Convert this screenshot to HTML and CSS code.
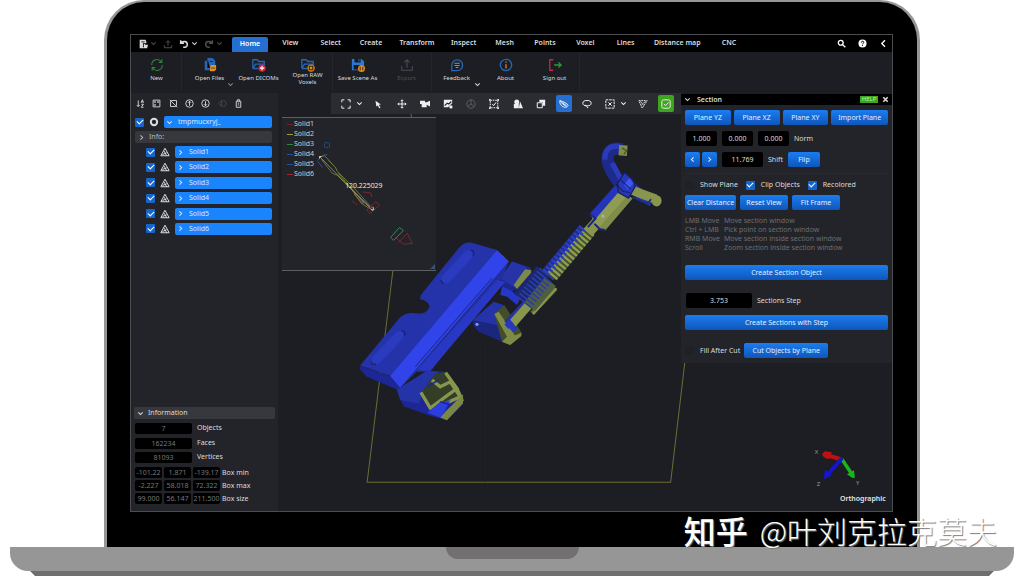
FILE: index.html
```html
<!DOCTYPE html>
<html lang="en">
<head>
<meta charset="utf-8">
<meta name="viewport" content="width=device-width, initial-scale=1">
<title>Section</title>
<link rel="stylesheet" href="styles.css">
</head>
<body>
<svg class="sprite" aria-hidden="true">
  <symbol id="down" viewBox="0 0 8 8"><path class="ln" d="M1.5 2.7 4 5.2 6.5 2.7"/></symbol>
  <symbol id="right" viewBox="0 0 8 8"><path class="ln" d="M2.8 1.5 5.3 4 2.8 6.5"/></symbol>
  <symbol id="left" viewBox="0 0 8 8"><path class="ln" d="M5.3 1.5 2.8 4 5.3 6.5"/></symbol>
  <symbol id="tri" viewBox="0 0 12 12"><path class="ln" d="M6 1.5 11 10.5H1Z M5 5 8 10.500 M3 9 8 7"/></symbol>
</svg>
<div class="laptop">
  <div class="lid">
    <div class="screen">
      <header class="menubar">
        <div class="quick">
          <button aria-label="File"><svg viewBox="0 0 12 12"><path fill="currentColor" d="M2 1h7l1 2v2H6v6H2Z"/><path fill="currentColor" d="M6 6h2l1 1h3l-1 4H6Z"/><path stroke="#000" d="M4 3.500H8M6.500 5.500V10"/></svg></button>
          <button aria-label="File menu" class="dim tiny"><svg><use href="#down"/></svg></button>
          <button aria-label="Upload" class="dim gap"><svg viewBox="0 0 12 12"><path class="ln" d="M6 8V2M3.500 4.500 6 2l2.500 2.500M1.500 7.500V10.500h9V7.500"/></svg></button>
          <button aria-label="Undo" class="gap"><svg viewBox="0 0 12 12"><path class="ln heavy" d="M2 1.500V5H6M2 5C4 2 10 2 10 6.500 10 9 8 10 5 10"/></svg></button>
          <button aria-label="Undo history" class="tiny"><svg><use href="#down"/></svg></button>
          <button aria-label="Redo" class="dim gap"><svg viewBox="0 0 12 12"><path class="ln heavy" d="M10 1.500V5H6M10 5C8 2 2 2 2 6.500 2 9 4 10 7 10"/></svg></button>
          <button aria-label="Redo history" class="dim tiny"><svg><use href="#down"/></svg></button>
        </div>
        <nav class="tabs">
          <button class="active">Home</button><button>View</button><button>Select</button><button>Create</button><button>Transform</button><button>Inspect</button><button>Mesh</button><button>Points</button><button>Voxel</button><button>Lines</button><button>Distance map</button><button>CNC</button>
        </nav>
        <div class="utils">
          <button aria-label="Search"><svg viewBox="0 0 12 12"><circle class="ln heavy" cx="5" cy="5" r="3.200"/><path class="ln heavy" d="m7.500 7.500 3.500 3.500"/></svg></button>
          <button aria-label="Help"><svg viewBox="0 0 12 12"><circle cx="6" cy="6" r="5.400" fill="currentColor"/><path d="M4.300 4.800C4.300 2.300 7.800 2.500 7.700 4.500 7.600 5.700 6 5.700 6 7.200M6 8.200V9.400" fill="none" stroke="#000" stroke-width="1.300"/></svg></button>
          <button aria-label="Collapse ribbon"><svg viewBox="0 0 8 8"><path class="ln" d="M5.300 1.200 2.500 4 5.300 6.800"/></svg></button>
        </div>
      </header>

      <div class="ribbon">
        <div class="group">
          <button><svg viewBox="0 0 16 16" class="refresh"><path class="ln" stroke-width="1.500" d="M2 8a6 6 0 0 1 11-3.500M13.500 1.500v3.500H10M14 8a6 6 0 0 1-11 3.500M2.500 14.500V11H6"/></svg><span>New</span></button>
        </div>
        <div class="group">
          <button><svg viewBox="0 0 16 16"><path fill="#2466b8" d="M5 0h6l3 3v8H8v3H2V3h3Z"/><path stroke="#17191e" d="M5.500 3V11H8M8 4h3"/><path fill="#e0912a" d="M8 10l1-2h6v5l-2 2H8Z"/><path stroke="#5c3a10" d="M9 11.500h5"/></svg><span>Open Files</span><svg class="caret dim"><use href="#down"/></svg></button>
          <button><svg viewBox="0 0 16 16"><path fill="none" stroke="#2466b8" stroke-width="1.500" d="M1 12V2h5l1.500 2H14v4M1 12 4 7h11M1 12h6"/><circle cx="11.500" cy="11.500" r="4.200" fill="#d4273c"/><path stroke="#fff" stroke-width="1.300" d="M9 11.500h5M11.500 9v5"/></svg><span>Open DICOMs</span></button>
          <button class="two"><svg viewBox="0 0 16 16"><path fill="none" stroke="#2466b8" stroke-width="1.500" d="M1 12V2h5l1.500 2H14v4M1 12 4 7h11M1 12h6"/><circle cx="11.500" cy="11.500" r="4.200" fill="#e28a1c"/><path fill="none" stroke="#3a2508" stroke-width="1.200" d="M9.500 9.500h4v4h-4Z"/></svg><span>Open RAW Voxels</span></button>
        </div>
        <div class="group">
          <button><svg viewBox="0 0 16 16"><path fill="#2878d8" d="M1 1h11l3 3v10H1Z"/><path fill="#17191e" d="M4 1h7v4H4ZM3 8h10v5H3Z"/><path stroke="#2878d8" d="M9 1v3"/><circle cx="12" cy="12" r="4" fill="#e28a1c"/><path fill="none" stroke="#3a2508" d="M10.500 10v4M13.500 10v4"/></svg><span>Save Scene As</span></button>
          <button class="dim"><svg viewBox="0 0 16 16"><path class="ln" d="M8 11V2M5 5l3-3 3 3M2 9v5h12V9"/></svg><span>Export</span></button>
        </div>
        <div class="group">
          <button><svg viewBox="0 0 16 16"><path fill="none" stroke="#2466b8" stroke-width="1.500" d="M2 14.500V8a6.200 6.200 0 1 1 6.200 6.500Z"/><path stroke="#b5913a" stroke-width="1.200" d="M5 6h6M5 8.500h6M6.500 10.800h3"/></svg><span>Feedback</span><svg class="caret"><use href="#down"/></svg></button>
          <button><svg viewBox="0 0 16 16"><circle cx="8" cy="8" r="6.500" fill="none" stroke="#2466b8" stroke-width="1.500"/><path stroke="#d07a34" stroke-width="1.600" d="M8 7v5M8 4v1.500"/></svg><span>About</span></button>
          <button><svg viewBox="0 0 16 16"><path fill="none" stroke="#c22743" stroke-width="1.500" d="M6 2H2v12h4"/><path fill="none" stroke="#2f9a3a" stroke-width="1.500" d="M7 8h8M12 5l3 3-3 3"/></svg><span>Sign out</span></button>
        </div>
      </div>

      <main class="work">
        <aside class="side">
          <div class="sidetools">
            <button aria-label="Sort"><svg viewBox="0 0 12 12"><path class="ln" d="M3 2v8M1 8l2 2 2-2M7 5l1.500-4L10 5M7.500 3.800h2M7 7h3L7 11h3"/></svg></button>
            <button aria-label="Select all"><svg viewBox="0 0 12 12"><path class="ln" d="M1.500 1.500h9v9h-9Z"/><path fill="currentColor" d="M3 3h2v2H3ZM7 3h2v2H7ZM3 7h2v2H3Z"/></svg></button>
            <button aria-label="Deselect"><svg viewBox="0 0 12 12"><path class="ln" d="M3 2h7v7M2 3v7h7M1 1l10 10"/></svg></button>
            <button aria-label="Move up"><svg viewBox="0 0 12 12"><circle class="ln" cx="6" cy="6" r="5"/><path class="ln" d="M6 9V3M4 5l2-2 2 2"/></svg></button>
            <button aria-label="Move down"><svg viewBox="0 0 12 12"><circle class="ln" cx="6" cy="6" r="5"/><path class="ln" d="M6 3v6M4 7l2 2 2-2"/></svg></button>
            <button aria-label="Flip" class="dim"><svg viewBox="0 0 12 12"><path class="ln" d="M5 2 1 6l4 4ZM7 2c5 0 5 8 0 8"/></svg></button>
            <button aria-label="Delete"><svg viewBox="0 0 12 12"><path class="ln" d="M3 3h6v8H3ZM4.500 3V1h3v2M5 5.500h2M5 8h2"/></svg></button>
          </div>
          <div class="row root">
            <input type="checkbox" checked aria-label="Show tmpmucxryj_">
            <svg class="kind" viewBox="0 0 12 12"><circle cx="6" cy="6" r="3.800" fill="none" stroke="currentColor" stroke-width="2.400"/></svg>
            <button class="node"><svg><use href="#down"/></svg>tmpmucxryj_</button>
          </div>
          <button class="fold info"><svg><use href="#right"/></svg>Info:</button>
          <div class="tree">
            <div class="row child"><input type="checkbox" checked aria-label="Show Solid1"><svg class="kind"><use href="#tri"/></svg><button class="node"><svg><use href="#right"/></svg>Solid1</button></div>
            <div class="row child"><input type="checkbox" checked aria-label="Show Solid2"><svg class="kind"><use href="#tri"/></svg><button class="node"><svg><use href="#right"/></svg>Solid2</button></div>
            <div class="row child"><input type="checkbox" checked aria-label="Show Solid3"><svg class="kind"><use href="#tri"/></svg><button class="node"><svg><use href="#right"/></svg>Solid3</button></div>
            <div class="row child"><input type="checkbox" checked aria-label="Show Solid4"><svg class="kind"><use href="#tri"/></svg><button class="node"><svg><use href="#right"/></svg>Solid4</button></div>
            <div class="row child"><input type="checkbox" checked aria-label="Show Solid5"><svg class="kind"><use href="#tri"/></svg><button class="node"><svg><use href="#right"/></svg>Solid5</button></div>
            <div class="row child"><input type="checkbox" checked aria-label="Show Solid6"><svg class="kind"><use href="#tri"/></svg><button class="node"><svg><use href="#right"/></svg>Solid6</button></div>
          </div>

          <section class="information">
            <button class="fold"><svg><use href="#down"/></svg>Information</button>
            <div class="stat"><input id="objects" value="7" readonly><label for="objects">Objects</label></div>
            <div class="stat"><input id="faces" value="162234" readonly><label for="faces">Faces</label></div>
            <div class="stat"><input id="vertices" value="81093" readonly><label for="vertices">Vertices</label></div>
            <div class="box"><input id="min" value="-101.22" readonly><input aria-label="Box min y" value="1.871" readonly><input aria-label="Box min z" value="-139.17" readonly><label for="min">Box min</label></div>
            <div class="box"><input id="max" value="-2.227" readonly><input aria-label="Box max y" value="58.018" readonly><input aria-label="Box max z" value="72.322" readonly><label for="max">Box max</label></div>
            <div class="box"><input id="size" value="99.000" readonly><input aria-label="Box size y" value="56.147" readonly><input aria-label="Box size z" value="211.500" readonly><label for="size">Box size</label></div>
          </section>
        </aside>

        <div class="viewport">
          <svg class="scene" viewBox="278 93 613 418" preserveAspectRatio="xMidYMid slice" role="img" aria-label="3D model cut by a section plane">
            <path d="M411 113v5M393 268 367 482H670L685 355" fill="none" stroke="#6c6d35"/>
            <path d="M485 345V482" stroke="#202228"/>
            <!-- bracket plate -->
            <g transform="translate(350 230) scale(.3333)">
              <path fill="#1c278f" d="M450 145 485 95 540 112 542 130 496 178 480 190 455 170Z"/>
              <path fill="#2634a8" d="M450 145 485 95 530 112 492 172Z"/>
              <path fill="#7d8a48" d="M490 165 524 118 543 120 540 140 500 178Z"/>
              <path fill="#8c9a4e" d="M500 190 545 145 560 160 520 200Z"/>
              <path fill="#2536c8" d="M455 170 480 180 510 205 500 225 470 200 450 195Z"/>
              <path fill="#1b267f" d="M368 270 440 230 515 310 480 345 385 305 368 285Z"/>
              <path fill="#2433a8" d="M368 270 430 215 460 225 440 285Z"/>
              <path fill="#434d28" d="M432 252 462 225 515 310 480 345 455 335Z"/>
              <path fill="#7d8a48" d="M432 252 445 245 495 318 460 330 513 308 513 318 480 345 455 335 470 320Z"/>
              <circle cx="380" cy="283" r="5" fill="#8490e8"/>
              <path fill="#1c2795" d="M30 408 120 438 150 474 230 422 290 425 340 500 335 525 290 570 235 555 160 528 140 478 50 440 30 418Z"/>
              <path fill="#2433a9" d="M30 406 150 262Q170 245 198 250 228 255 238 230 235 213 210 208 208 200 216 190L325 55Q340 36 362 38L440 60 122 438Z"/>
              <path fill="#3144ea" d="M440 60 476 95 150 474 120 438Z"/>
              <path fill="#222f9f" d="M476 95 455 145 240 425 200 425 150 474Z"/>
              <path fill="#2838c4" d="M440 150 465 155 240 422 200 420Z"/>
              <path stroke="#1c298e" stroke-width="3" d="M425 145 195 410"/>
              <path stroke="#2a3bc0" stroke-width="28" stroke-linecap="round" d="M287 147 354 75M78 390 147 317"/>
              <path fill="none" stroke="#19236f" stroke-width="4" d="M362 60Q374 64 368 78M154 302Q170 305 162 318M273 150Q272 160 282 160M64 394Q64 406 78 402"/>
              <path fill="#2433a8" d="M140 478 230 422 265 425 220 485 205 520 150 510Z"/>
              <path fill="#343d26" d="M215 485 255 430 290 425 338 500 270 520 238 535Z"/>
              <path fill="none" stroke="#87954d" stroke-width="10" d="M212 487 240 534 320 475 286 428M245 450 270 470 300 455 330 500 285 520M320 475 335 510 285 565"/>
              <path fill="#2c3ee0" d="M232 548 270 515 300 510 285 540 270 562Z"/>
              <path fill="#7b8844" d="M285 545 338 492 338 520 290 570 270 562Z"/>
              <path stroke="#1d2795" stroke-width="5" d="M230 470 265 450M270 515 305 525"/>
            </g>
            <!-- spring damper and hook -->
            <g transform="translate(480 130) scale(.3333)" fill="none">
              <path stroke="#5b6836" stroke-width="15" d="M155 550 225 475"/>
              <path stroke="#87954d" stroke-width="7" d="M158 552 228 475"/>
              <path stroke="#25349f" stroke-width="18" d="M78 580 135 520"/>
              <path stroke="#87954d" stroke-width="26" d="M95 582 145 525"/>
              <path stroke="#2838bd" stroke-width="18" d="M78 590 95 575M90 585 105 600"/>
              <path stroke="#1b286f" stroke-width="48" d="M187 425 118 505"/>
              <path stroke="#4f5e40" stroke-width="42" d="M210 455 148 530"/>
              <path stroke="#2b3da8" stroke-width="56" stroke-dasharray="5 7" d="M200 430 130 518"/>
              <path stroke="#202d8c" stroke-width="28" d="M308 294 195 430"/>
              <path stroke="#46532d" stroke-width="36" d="M328 304 214 440"/>
              <path stroke="#8f9e52" stroke-width="36" stroke-dasharray="7 6" d="M328 304 214 440"/>
              <path stroke="#2c3fc4" stroke-width="25" stroke-dasharray="7 6" d="M308 294 195 430"/>
              <path stroke="#87954d" stroke-width="34" d="M365 260 322 308"/>
              <path fill="#7f8d48" d="M408 172 456 206 374 302 358 295 342 284 332 256Z"/>
              <path fill="#8f9d54" d="M412 178 440 198 358 290 338 274Z"/>
              <path fill="#2535bb" d="M404 166 420 180 343 270 328 252Z"/>
              <path stroke="#1b2680" stroke-width="6" d="M328 252 345 266 322 292M342 282 358 298 374 300"/>
              <path stroke="#1d2a8c" stroke-width="36" d="M425 58Q380 48 381 92 385 120 415 158"/>
              <path stroke="#2a3ab8" stroke-width="16" d="M418 50Q372 44 373 90M395 100 422 150"/>
              <path stroke="#7f8d4c" stroke-width="31" d="M415 61 440 63"/>
              <path stroke="#47532c" stroke-width="4" d="M425 55 438 63 430 74"/>
              <path stroke="#2433a8" stroke-width="30" d="M445 165 480 195 515 216"/>
              <path stroke="#87954d" stroke-width="28" d="M452 180Q490 196 526 208"/>
              <path stroke="#1e2b91" stroke-width="5" d="M456 202 500 222 512 208"/>
              <ellipse cx="528" cy="213" rx="15" ry="17" fill="#87954d"/>
              <path fill="#2838bb" stroke="#17215f" stroke-width="4" d="M432 128 456 148 464 170 444 205 414 188 411 160Z"/>
              <path fill="#4055f2" d="M430 165 446 145 459 160 442 180Z"/>
              <path stroke="#17215f" stroke-width="3" d="M412 168 428 185 448 188M420 150 450 178"/>
              <circle cx="367" cy="259" r="4" fill="#aab5b4"/>
            </g>
            <!-- axis gizmo -->
            <path stroke="#bd1111" stroke-width="4" d="M840 459 828 455.500"/><path fill="#bd1111" d="M821 454 824 451 831 452 828 459 823 457Z"/>
            <path stroke="#1bb51b" stroke-width="3.500" d="M841 459 851 474"/><path fill="#1bb51b" d="M846 474 853 470 854 477 852 478Z"/>
            <path stroke="#1515cf" stroke-width="4" d="M841 458 828 473"/><path fill="#1515cf" d="M824 469 831 475 823 479Z"/>
            <g class="axis"><text x="814" y="454">X</text><text x="855" y="485">Y</text><text x="816" y="486">Z</text></g>
            <text class="projection" x="839" y="501">Orthographic</text>
          </svg>

          <div class="stage">
            <div class="toolbar">
              <button aria-label="Fit view"><svg viewBox="0 0 12 12"><path class="ln" d="M1 4V1h3M8 1h3v3M11 8v3H8M4 11H1V8"/></svg></button>
              <button aria-label="Fit options" class="tiny"><svg><use href="#down"/></svg></button>
              <button aria-label="Pointer"><svg viewBox="0 0 12 12"><path fill="currentColor" d="M3 2 9.500 6.500 7 7l2 3.500-1.500.7-1.800-3.500L4 9Z"/></svg></button>
              <button aria-label="Move"><svg viewBox="0 0 12 12"><path class="ln" d="M6 1v10M1 6h10M4.500 2.500 6 1l1.500 1.500M4.500 9.500 6 11l1.500-1.500M2.500 4.500 1 6l1.500 1.500M9.500 4.500 11 6 9.500 7.500"/></svg></button>
              <button aria-label="Camera"><svg viewBox="0 0 12 12"><path fill="currentColor" d="M0 2h6v2h2l4-2v7L8 7v3H2V6H0Z"/></svg></button>
              <button aria-label="Background"><svg viewBox="0 0 12 12"><path fill="currentColor" d="M1 1h10v4L6 10H1Z"/><path d="m2 8 3-3 2 1 3-3" stroke="#26282d" stroke-width="1.500" fill="none"/><circle cx="9.500" cy="9.500" r="2" fill="currentColor"/></svg></button>
              <button aria-label="Wheel" class="dim"><svg viewBox="0 0 12 12"><circle class="ln" cx="6" cy="6" r="5"/><path class="ln" d="M6 1v5L2 9M6 6l4 3"/></svg></button>
              <button aria-label="Select box"><svg viewBox="0 0 12 12"><path class="ln" stroke-dasharray="2 1" d="M1.500 1.500h9v9h-9Z"/><path class="ln" d="m4 6 1.500 2L8.500 4"/><path fill="currentColor" d="M0 0h2v2H0ZM10 0h2v2h-2ZM0 10h2v2H0ZM10 10h2v2h-2Z"/></svg></button>
              <button aria-label="Shapes"><svg viewBox="0 0 12 12"><circle cx="4.500" cy="3.500" r="3" fill="currentColor"/><path fill="currentColor" d="M1 6h6v5H1ZM8.500 3l3.500 8H7Z"/></svg></button>
              <button aria-label="Copy"><svg viewBox="0 0 12 12"><path fill="currentColor" d="M4 1h7v7H8V4H4Z"/><path class="ln" d="M1.500 4.500h6v6h-6Z"/></svg></button>
              <button aria-label="Section" class="on"><svg viewBox="0 0 12 12"><path class="ln" d="M1 2c4 1 9 3 10 6-2 3-6 2-8 0S1 4 1 2l8 6M3 5l6 4"/></svg></button>
              <button aria-label="Lasso"><svg viewBox="0 0 12 12"><ellipse class="ln" cx="6" cy="5" rx="5" ry="3.200"/><path class="ln" d="M4 7c0 3 3 1 3 4"/></svg></button>
              <button aria-label="Clear selection"><svg viewBox="0 0 12 12"><path class="ln" stroke-dasharray="3 1" d="M1 1h10v10H1Z"/><path class="ln" d="m4 4 4 4M8 4 4 8"/></svg></button>
              <button aria-label="Selection options" class="tiny"><svg><use href="#down"/></svg></button>
              <button aria-label="Mesh points"><svg viewBox="0 0 12 12"><path class="ln" stroke-dasharray="2 1" d="M1 2h10L5 11ZM3 3l4 5M9 3 4 7"/></svg></button>
              <button aria-label="Confirm" class="ok"><svg viewBox="0 0 12 12"><rect class="ln" x="1" y="1" width="10" height="10" rx="2"/><path class="ln" d="m3.500 6 2 2L9 4"/></svg></button>
            </div>
            <div class="preview">
              <ul class="legend"><li class="red">Solid1</li><li class="yellow">Solid2</li><li class="green">Solid3</li><li class="blue">Solid4</li><li class="blue">Solid5</li><li class="crimson">Solid6</li></ul>
              <svg class="profile" viewBox="282 117 154 154" fill="none" role="img" aria-label="Section profile with distance 120.225029">
                <rect x="324" y="142" width="5" height="5" rx="1" stroke="#214a8c"/>
                <path stroke="#2d5590" d="m317 160 5-5 5-1M317 161l5 6"/>
                <path stroke="#6c7736" d="M319 157 324 155 335 167 337 171 354 188 372 208M321 159 332 173 337 175 352 190 361 203 370 209M328 160 336 168M338 173l26 30"/>
                <path stroke="#94752f" d="M350 188 370 207M354 194l10 11"/>
                <path stroke="#7c2833" d="m363 192 8 1 1 4M352 201l5 4M367 210l9-8 4 3-10 9ZM396 238l8 7 9-1-5-10M399 243l9-9"/>
                <path stroke="#278f57" d="m391 238 9-10 4 3-10 10Z"/>
                <path stroke="#a5a794" stroke-width=".7" d="m319 156 54 55"/>
                <path stroke="#d2d2c5" d="M371 210h3l-1-3M319 158v-2h2"/>
                <path fill="#35527a" d="M436 265v5h-5Z"/>
                <text class="measure" x="345" y="188">120.225029</text>
              </svg>
            </div>
          </div>

          <section class="section">
            <header><svg><use href="#down"/></svg><h2>Section</h2><a href="#help">HELP</a><button aria-label="Close"><svg class="close" viewBox="0 0 8 8"><path class="ln heavy" d="m1.500 1.500 5 5M6.500 1.500l-5 5"/></svg></button></header>
            <div class="body">
              <div class="planes"><button class="btn">Plane YZ</button><button class="btn">Plane XZ</button><button class="btn">Plane XY</button><button class="btn">Import Plane</button></div>
              <div class="line norm"><input id="norm" value="1.000"><input aria-label="Norm y" value="0.000"><input aria-label="Norm z" value="0.000"><label for="norm">Norm</label></div>
              <div class="line shift"><button class="btn sq" aria-label="Previous"><svg><use href="#left"/></svg></button><button class="btn sq" aria-label="Next"><svg><use href="#right"/></svg></button><input id="shift" value="11.769"><label for="shift">Shift</label><button class="btn flip">Flip</button></div>
              <div class="checks"><label><input type="checkbox">Show Plane</label><label><input type="checkbox" checked>Clip Objects</label><label><input type="checkbox" checked>Recolored</label></div>
              <div class="line views"><button class="btn">Clear Distance</button><button class="btn">Reset View</button><button class="btn">Fit Frame</button></div>
              <dl class="hints"><dt>LMB Move</dt><dd>Move section window</dd><dt>Ctrl + LMB</dt><dd>Pick point on section window</dd><dt>RMB Move</dt><dd>Move section inside section window</dd><dt>Scroll</dt><dd>Zoom section inside section window</dd></dl>
              <button class="btn wide">Create Section Object</button>
              <div class="line step"><input id="step" value="3.753"><label for="step">Sections Step</label></div>
              <button class="btn wide">Create Sections with Step</button>
              <div class="line cut"><label><input type="checkbox">Fill After Cut</label><button class="btn">Cut Objects by Plane</button></div>
            </div>
          </section>
        </div>
      </main>
    </div>
  </div>
  <div class="base"><div class="notch"></div></div>
  <div class="foot"></div>
  <div class="watermark"><b>知乎</b><span>@叶刘克拉克莫夫</span></div>
</div>
</body>
</html>
```
FILE: styles.css
```css
* { box-sizing: border-box; }
body { margin: 0; background: #fff; color: #dcdcdc; font: 7px/10px "Noto Sans", "Open Sans", sans-serif; }
button, input { font: inherit; color: inherit; margin: 0; padding: 0; border: 0; background: none; min-width: 0; }
button { display: flex; align-items: center; justify-content: center; white-space: nowrap; cursor: pointer; }
ul, dl, dd, h2 { margin: 0; padding: 0; list-style: none; }
svg { display: block; width: 10px; height: 10px; flex: none; }
svg:has(use[href="#down"]), svg:has(use[href="#right"]), svg:has(use[href="#left"]) { width: 7px; height: 7px; }
.sprite { position: absolute; width: 0; height: 0; }
.ln { fill: none; stroke: currentColor; stroke-width: 1.2; }
.heavy { stroke-width: 1.8; }
.dim { color: #4c4e53; }

.laptop { position: relative; display: flex; flex-direction: column; min-height: 100vh; overflow: hidden; }
.lid { flex: 1; display: flex; margin: 0 104px; padding: 32px 24px 35px 23px; border: 3px solid #969696; border-width: 2px 3px 0; border-radius: 40px 40px 0 0; background: #000; }
.screen { flex: 1; min-width: 0; display: flex; flex-direction: column; border: 1px solid #4c4d51; background: #1c1e23; }
.base { height: 24px; margin: 0 10px; background: #969696; border-radius: 0 0 18px 18px; }
.notch { width: 133px; height: 12px; margin: 0 auto; background: #727070; border-radius: 0 0 12px 12px; }
.foot { height: 5px; margin: 0 30px; background: #6e6e6e; clip-path: polygon(0 0, 100% 0, calc(100% - 5px) 100%, 5px 100%); }
.watermark { position: absolute; right: 27px; bottom: 24px; display: flex; gap: 12px; color: #fff; font: 30px/44px "Noto Sans CJK SC", sans-serif; text-shadow: 1px 1px 1px #777; }
.watermark b { font-size: 32px; font-weight: 500; }
.watermark span { font-weight: 300; }

.menubar { display: flex; align-items: center; height: 17px; background: #000; }
.quick { display: flex; align-items: center; width: 101px; padding-left: 7px; }
.quick .tiny { margin-left: 2px; }
.quick .gap { margin-left: 6px; }
.tabs { flex: 0 1 515px; display: flex; justify-content: space-between; }
.tabs button { min-width: 36px; height: 15px; padding: 0 6px; font-weight: 600; }
.tabs .active { margin-top: 1px; background: #246fd0; border-radius: 2px 2px 0 0; color: #fff; }
.utils { display: flex; gap: 12px; margin-left: auto; padding: 0 4px 1px 0; color: #fff; }
.utils svg { width: 9px; height: 9px; }

.ribbon { display: flex; height: 41px; padding-bottom: 2px; }
.group { display: flex; border-right: 1px solid #24262b; }
.group:first-child { padding-left: 1px; }
.ribbon button { position: relative; flex-direction: column; justify-content: flex-start; width: 49px; padding-top: 6px; gap: 3px; font-size: 6px; line-height: 7px; }
.ribbon button > svg:first-child { width: 14px; height: 14px; }
.ribbon .group:nth-child(2) { padding-left: 3px; }
.ribbon .refresh { color: #2a8836; }
.ribbon .two { gap: 0; white-space: normal; }
.ribbon .two span { width: 36px; }
.ribbon .caret { position: absolute; right: 0; bottom: 3px; }
.ribbon .caret.dim { color: #888; }

.work { flex: 1; display: grid; grid-template-columns: 147px 1fr; }
.side { display: flex; flex-direction: column; gap: 3px; padding: 0 6px 7px 4px; background: #22242a; }
.sidetools { display: flex; justify-content: space-between; width: 108px; height: 20px; padding-left: 1px; align-items: center; }
.sidetools svg { width: 9px; height: 9px; }
.row { display: flex; align-items: center; gap: 5px; height: 12px; }
.row .kind { width: 10px; height: 10px; color: #ddd; }
.tree { display: flex; flex-direction: column; justify-content: space-between; height: 89px; }
.child { padding-left: 11px; }
.node { flex: 1; justify-content: flex-start; gap: 5px; height: 12px; padding-left: 2px; background: #1a84fc; border-radius: 2px; color: #dce8fa; }
.fold { width: 100%; justify-content: flex-start; gap: 4px; height: 12px; padding-left: 3px; background: #36383d; border-radius: 2px; }
.side .info { color: #bbb; }

input[type="checkbox"] { appearance: none; flex: none; width: 9px; height: 9px; background: #1f2126; border-radius: 1px; display: grid; place-items: center; }
input[type="checkbox"]:checked { background: #1565cc; }
input[type="checkbox"]:checked::after { content: ""; width: 5px; height: 3px; margin-top: -2px; border: solid #fff; border-width: 0 0 1px 1px; rotate: -45deg; }
input:not([type="checkbox"]) { background: #000; border-radius: 2px; text-align: center; }

.information { margin: auto -4px 0 0; display: flex; flex-direction: column; gap: 2px; }
.information .fold { margin: 0 0 1px -1px; width: 141px; }
.stat, .box { display: flex; align-items: center; }
.stat { gap: 5px; height: 12px; }
.box { gap: 2px; height: 11px; }
.fold + .stat + .stat { margin-top: 1px; }
.stat + .box { margin-top: 2px; }
.information input { height: 11px; color: #777; }
.stat input { width: 57px; }
.box input { width: 27px; }

.viewport { position: relative; display: flex; align-items: flex-start; }
.scene { position: absolute; inset: 0; width: 100%; height: 100%; }
.axis { fill: #999; font-size: 6px; }
.projection { fill: #e4e4e4; font-weight: 600; }
.stage { position: relative; flex: 1; min-width: 0; padding-left: 4px; }
.toolbar { display: flex; align-items: center; justify-content: space-between; height: 21px; margin-left: 49px; padding: 0 7px; background: #2a2c31; color: #eee; }
.toolbar button { width: 16px; height: 17px; border-radius: 2px; }
.toolbar .tiny { width: 8px; margin-left: -6px; }
.toolbar .on { background: #246fd0; }
.toolbar .ok { background: #3da51e; }
.toolbar .dim { color: #5b5d61; }
.preview { position: relative; width: 154px; height: 154px; margin-top: 3px; border: solid #5c5e62; border-width: 1px 0; background: #22242a; }
.legend { padding: 1px 0 0 5px; }
.legend li { display: flex; align-items: center; gap: 1px; color: #ccc; }
.legend li::before { content: ""; width: 6px; height: 1px; background: currentColor; }
.legend .red::before { background: #6e2430; }
.legend .yellow::before { background: #a0a030; }
.legend .green::before { background: #2c8a40; }
.legend .blue::before { background: #24529a; }
.legend .crimson::before { background: #a02830; }
.profile { position: absolute; inset: 0; width: 100%; height: 100%; }
.measure { fill: #e8e8e8; font-size: 7px; }

.section { position: relative; width: 211px; margin-top: 1px; background: #222429; }
.section header { display: flex; align-items: center; height: 11px; padding: 0 3px; background: #000; }
.section h2 { flex: 1; margin-left: 6px; font-size: 7px; font-weight: 600; }
.section a { width: 18px; margin-right: 4px; background: #3da51e; color: #b8f0a4; font-size: 6px; line-height: 7px; text-align: center; text-decoration: none; }
.close { width: 7px; height: 7px; }
.body { padding: 5px 4px; }
.btn { height: 15px; background: linear-gradient(#1b7df0, #0e56bb); border-radius: 2px; color: #e4eeff; }
.planes { display: grid; grid-template-columns: 46fr 46fr 46fr 57fr; gap: 3px; margin-bottom: 6px; }
.line { display: flex; align-items: center; gap: 5px; }
.line input:not([type="checkbox"]) { height: 15px; }
.norm { padding-left: 1px; }
.norm input { width: 31px; }
.shift { margin-top: 6px; }
.sq { width: 15px; }
.sq + .sq { margin-left: -3px; }
.shift input { width: 41px; }
.flip { width: 32px; }
.checks { display: flex; gap: 8px; margin: 6px 0 5px; padding-top: 6px; border-top: 1px solid #282a2f; }
.checks label, .cut label { display: flex; align-items: center; gap: 6px; }
.views { gap: 4px; margin-bottom: 6px; }
.views .btn { width: 48px; }
.views .btn:first-child { width: 51px; }
.hints { display: grid; grid-template-columns: 39px 1fr; color: #6d6e70; line-height: 9px; margin-bottom: 13px; }
.wide { width: 100%; }
.step { margin: 13px 0 7px; padding-left: 1px; }
.step input { width: 66px; }
.cut { margin-top: 13px; gap: 4px; }
.cut .btn { width: 84px; }
```
